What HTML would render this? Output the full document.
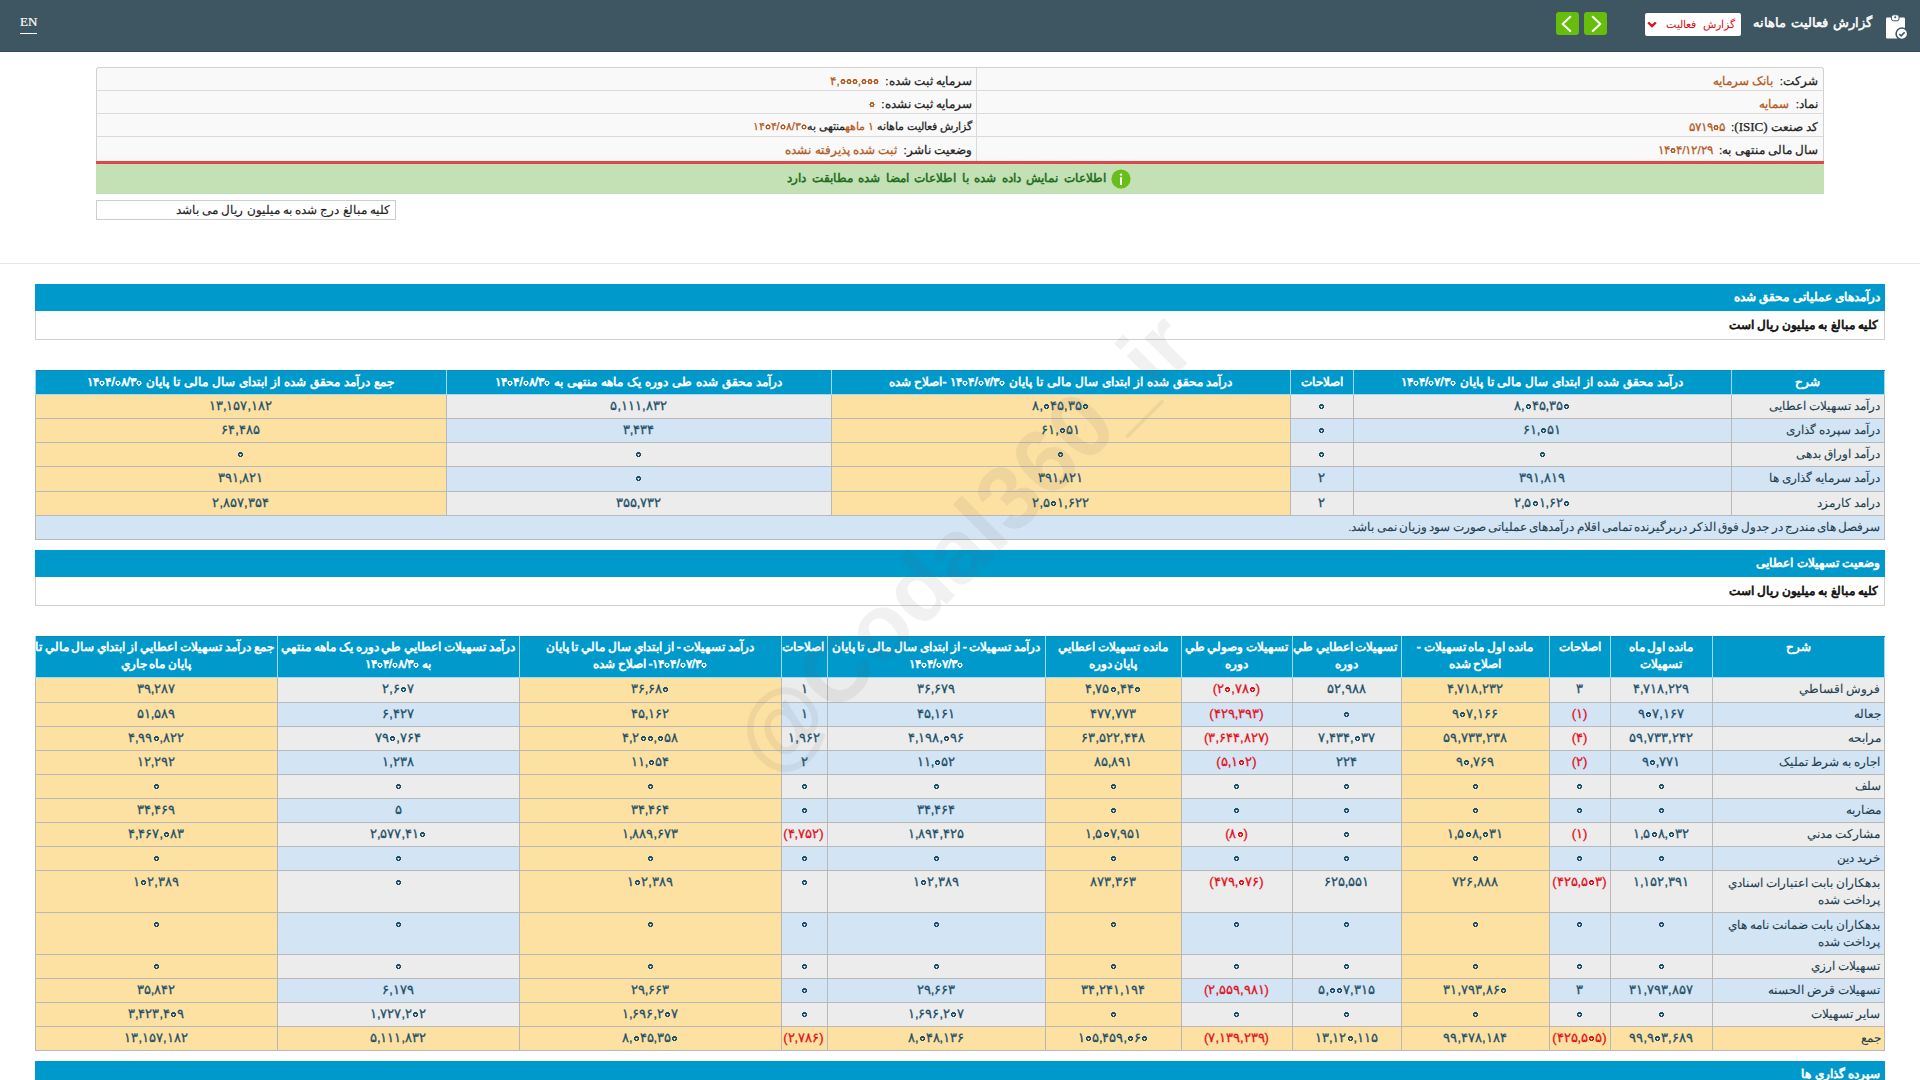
<!DOCTYPE html><html><head><meta charset="utf-8"><style>
*{box-sizing:border-box;margin:0;padding:0}
html,body{width:1920px;height:1080px;overflow:hidden;background:#fff}
body{font-family:"Liberation Sans",sans-serif;font-size:11.6px;color:#222;position:relative}
.abs{position:absolute}
.bd{-webkit-text-stroke:0.35px currentColor}
#top{left:0;top:0;width:1920px;height:52px;background:#3e5562;border-bottom:1px solid #35474f}
#en{left:20px;top:14px;font-family:"Liberation Serif",serif;color:#fff;font-size:13px;line-height:15px;border-bottom:1px solid #fff;padding-bottom:4px;-webkit-text-stroke:0.2px #fff}
#title{right:48px;top:14px;color:#fff;font-size:13px;word-spacing:1.5px;line-height:18px;-webkit-text-stroke:0.5px #fff;direction:rtl;white-space:nowrap}
#dd{left:1645px;top:13px;width:96px;height:23px;background:#fff;border-radius:2px;color:#d81010;font-size:11px;word-spacing:4px;direction:rtl;padding-right:6px;line-height:22px;white-space:nowrap}
.gbtn{top:12px;width:23px;height:23px;background:#67bd0c;border-radius:3px}
.info{left:96px;top:67px;width:1728px;height:94px;border:1px solid #d2d2d2;border-bottom:none;border-radius:3px 3px 0 0;background:#f9f9f9;overflow:hidden}
.info .row{position:absolute;left:0;width:100%;height:23px;border-bottom:1px solid #dadada}
.info .c{position:absolute;height:23px;line-height:23px;direction:rtl;white-space:nowrap;-webkit-text-stroke:0.25px currentColor}
.lab{color:#222}.val{color:#b5581b}
.serif{font-family:"Liberation Serif",serif;font-size:13px}
#redl{left:96px;top:161px;width:1728px;height:3px;background:#e24646}
#green{left:96px;top:164px;width:1728px;height:30px;background:#c3e1b4}
#gtxt{right:814px;top:169px;line-height:18px;color:#1d6b1d;font-size:12px;word-spacing:2.2px;-webkit-text-stroke:0.5px #1d6b1d;direction:rtl;white-space:nowrap}
#note1{left:96px;top:200px;width:300px;height:20px;border:1px solid #cdcdcd;direction:rtl;padding-right:5px;line-height:18px;font-size:11.8px;-webkit-text-stroke:0.15px #222;white-space:nowrap}
#sep{left:0;top:263px;width:1920px;height:1px;background:#e8e8e8}
.sech{left:35px;width:1850px;height:27px;background:#0099cc;color:#fff;direction:rtl;padding-right:5px;line-height:26px;font-size:11.8px;-webkit-text-stroke:0.7px #fff;white-space:nowrap}
.secs{left:35px;width:1850px;height:29px;border:1px solid #cfcfcf;border-top:none;color:#111;direction:rtl;padding-right:6px;line-height:28px;font-size:11.8px;-webkit-text-stroke:0.7px #111;white-space:nowrap}
table{border-collapse:collapse;table-layout:fixed;direction:rtl;position:absolute;width:1850px;left:34.5px}
td,th{border:1px solid #b8b8b8;padding:0 3px;overflow:hidden;white-space:nowrap}
th{background:#0099cc;color:#fff;font-weight:normal;-webkit-text-stroke:0.6px #fff;font-size:12px;word-spacing:0.6px;line-height:22px;text-align:center;vertical-align:top;border-color:#9fdcf3;border-top-color:#1b84ad}
td{text-align:center;color:#1d5068;font-size:13px;vertical-align:top;line-height:22px;-webkit-text-stroke:0.3px currentColor}
td.d{text-align:right;color:#22404e;font-size:11.6px;-webkit-text-stroke:0.1px currentColor}
td.d2{line-height:17px;padding-top:3px}
tr.h2 th{line-height:17px;padding-top:2px;word-spacing:-0.5px}
.nr{word-spacing:-0.9px}
tr.g td{background:#ececec}
tr.b td{background:#d3e4f5}
td.y, tr.y td{background:#fde1a2 !important}
.neg{color:#e3101a}
i.z{font-style:normal;color:transparent;-webkit-text-stroke:0;--zc:#1d5068;background:radial-gradient(circle at 50% 58%, transparent 0.9px, var(--zc) 1.2px, var(--zc) 2.4px, transparent 2.7px)}
.neg i.z{--zc:#e3101a}
th i.z{--zc:#fff}
.val i.z{--zc:#b5581b}
#wm{left:963px;top:543px;transform:translate(-50%,-50%) rotate(-45deg);font-size:91px;font-weight:bold;color:rgba(90,90,90,0.085);white-space:nowrap;pointer-events:none;line-height:1}
</style></head><body>
<div id="top" class="abs"></div>
<div id="en" class="abs">EN</div>
<div id="title" class="abs">گزارش فعالیت ماهانه</div>
<div id="dd" class="abs">گزارش فعالیت</div>
<svg class="abs" style="left:1644px;top:18px" width="16" height="12" viewBox="0 0 16 12"><polyline points="4.2,4.5 8,8.2 11.8,4.5" fill="none" stroke="#e20a0a" stroke-width="2.4"/></svg>
<div class="abs gbtn" style="left:1556px"></div><div class="abs gbtn" style="left:1584px"></div>
<svg class="abs" style="left:1556px;top:12px" width="23" height="23" viewBox="0 0 23 23"><polyline points="14.3,4.7 6.6,11.9 14.3,19.1" fill="none" stroke="#fff" stroke-width="2" stroke-linecap="round" stroke-linejoin="round"/></svg>
<svg class="abs" style="left:1584px;top:12px" width="23" height="23" viewBox="0 0 23 23"><polyline points="8.7,4.7 16.4,11.9 8.7,19.1" fill="none" stroke="#fff" stroke-width="2" stroke-linecap="round" stroke-linejoin="round"/></svg>
<svg class="abs" style="left:1880px;top:10px" width="34" height="34" viewBox="0 0 34 34">
<rect x="6" y="7.5" width="19" height="21" rx="1.2" fill="#fff"/>
<rect x="11.5" y="4.8" width="7.5" height="6" rx="2" fill="#fff" stroke="#3e5562" stroke-width="1"/>
<circle cx="15.2" cy="7.3" r="1" fill="#3e5562"/>
<circle cx="21.9" cy="23.8" r="5.8" fill="#fff" stroke="#3e5562" stroke-width="1.6"/>
<polyline points="19.3,24 21.2,25.8 24.6,22.2" fill="none" stroke="#3e5562" stroke-width="1.6"/>
</svg>
<div class="abs info">
<div class="row" style="top:0px"></div>
<div class="c" style="right:5px;top:1px"><span class="lab">شرکت:</span>&nbsp; <span class="val">بانک سرمایه</span></div>
<div class="c" style="right:851px;top:1px"><span class="lab">سرمایه ثبت شده:</span>&nbsp; <span class="val">۴,<i class="z">۰</i><i class="z">۰</i><i class="z">۰</i>,<i class="z">۰</i><i class="z">۰</i><i class="z">۰</i></span></div>
<div class="row" style="top:23px"></div>
<div class="c" style="right:5px;top:24px"><span class="lab">نماد:</span>&nbsp; <span class="val">سمایه</span></div>
<div class="c" style="right:851px;top:24px"><span class="lab">سرمایه ثبت نشده:</span>&nbsp; <span class="val"><i class="z">۰</i></span></div>
<div class="row" style="top:46px"></div>
<div class="c" style="right:5px;top:47px"><span class="lab">کد صنعت <span class="serif">(ISIC)</span>:</span>&nbsp; <span class="val">۵۷۱۹<i class="z">۰</i>۵</span></div>
<div class="c" style="right:851px;top:47px;font-size:11px"><span class="lab">گزارش فعالیت ماهانه </span><span class="val">۱ ماهه</span><span class="lab">منتهی به</span><span class="val">۱۴<i class="z">۰</i>۴/<i class="z">۰</i>۸/۳<i class="z">۰</i></span></div>
<div class="c" style="right:5px;top:70px"><span class="lab">سال مالی منتهی به:</span>&nbsp; <span class="val">۱۴<i class="z">۰</i>۴/۱۲/۲۹</span></div>
<div class="c" style="right:851px;top:70px"><span class="lab">وضعیت ناشر:</span>&nbsp; <span class="val">ثبت شده پذیرفته نشده</span></div>
<div style="position:absolute;left:879px;top:0;width:1px;height:94px;background:#dadada"></div>
</div>
<div id="redl" class="abs"></div>
<div id="green" class="abs"></div>
<div id="gtxt" class="abs">اطلاعات نمایش داده شده با اطلاعات امضا شده مطابقت دارد</div>
<svg class="abs" style="left:1111px;top:169px" width="20" height="20" viewBox="0 0 20 20"><circle cx="10" cy="10" r="9.6" fill="#69bd1a"/><rect x="9" y="8.2" width="2" height="7.8" fill="#fff"/><circle cx="10" cy="5.6" r="1.2" fill="#fff"/></svg>
<div id="note1" class="abs">کلیه مبالغ درج شده به میلیون ریال می باشد</div>
<div id="sep" class="abs"></div>
<div class="abs sech" style="top:284px">درآمدهای عملیاتی محقق شده</div>
<div class="abs secs" style="top:311px">کلیه مبالغ به میلیون ریال است</div>
<table style="top:369.5px"><colgroup><col style="width:153px"><col style="width:378px"><col style="width:63px"><col style="width:459px"><col style="width:385px"><col style="width:411px"></colgroup>
<tr style="height:24px"><th>شرح</th><th>درآمد محقق شده از ابتدای سال مالی تا پایان ۱۴<i class="z">۰</i>۴/<i class="z">۰</i>۷/۳<i class="z">۰</i></th><th>اصلاحات</th><th>درآمد محقق شده از ابتدای سال مالی تا پایان ۱۴<i class="z">۰</i>۴/<i class="z">۰</i>۷/۳<i class="z">۰</i> -اصلاح شده</th><th>درآمد محقق شده طی دوره یک ماهه منتهی به ۱۴<i class="z">۰</i>۴/<i class="z">۰</i>۸/۳<i class="z">۰</i></th><th>جمع درآمد محقق شده از ابتدای سال مالی تا پایان ۱۴<i class="z">۰</i>۴/<i class="z">۰</i>۸/۳<i class="z">۰</i></th></tr>
<tr class="g" style="height:24px"><td class="d">درآمد تسهیلات اعطایی</td><td><bdo dir="ltr">۸,<i class="z">۰</i>۴۵,۳۵<i class="z">۰</i></bdo></td><td><bdo dir="ltr"><i class="z">۰</i></bdo></td><td class="y"><bdo dir="ltr">۸,<i class="z">۰</i>۴۵,۳۵<i class="z">۰</i></bdo></td><td><bdo dir="ltr">۵,۱۱۱,۸۳۲</bdo></td><td class="y"><bdo dir="ltr">۱۳,۱۵۷,۱۸۲</bdo></td></tr>
<tr class="b" style="height:24px"><td class="d">درآمد سپرده گذاری</td><td><bdo dir="ltr">۶۱,<i class="z">۰</i>۵۱</bdo></td><td><bdo dir="ltr"><i class="z">۰</i></bdo></td><td class="y"><bdo dir="ltr">۶۱,<i class="z">۰</i>۵۱</bdo></td><td><bdo dir="ltr">۳,۴۳۴</bdo></td><td class="y"><bdo dir="ltr">۶۴,۴۸۵</bdo></td></tr>
<tr class="g" style="height:24px"><td class="d">درآمد اوراق بدهی</td><td><bdo dir="ltr"><i class="z">۰</i></bdo></td><td><bdo dir="ltr"><i class="z">۰</i></bdo></td><td class="y"><bdo dir="ltr"><i class="z">۰</i></bdo></td><td><bdo dir="ltr"><i class="z">۰</i></bdo></td><td class="y"><bdo dir="ltr"><i class="z">۰</i></bdo></td></tr>
<tr class="b" style="height:25px"><td class="d">درآمد سرمایه گذاری ها</td><td><bdo dir="ltr">۳۹۱,۸۱۹</bdo></td><td><bdo dir="ltr">۲</bdo></td><td class="y"><bdo dir="ltr">۳۹۱,۸۲۱</bdo></td><td><bdo dir="ltr"><i class="z">۰</i></bdo></td><td class="y"><bdo dir="ltr">۳۹۱,۸۲۱</bdo></td></tr>
<tr class="g" style="height:24px"><td class="d">درامد کارمزد</td><td><bdo dir="ltr">۲,۵<i class="z">۰</i>۱,۶۲<i class="z">۰</i></bdo></td><td><bdo dir="ltr">۲</bdo></td><td class="y"><bdo dir="ltr">۲,۵<i class="z">۰</i>۱,۶۲۲</bdo></td><td><bdo dir="ltr">۳۵۵,۷۳۲</bdo></td><td class="y"><bdo dir="ltr">۲,۸۵۷,۳۵۴</bdo></td></tr>
<tr class="b" style="height:24px"><td class="d nr" colspan="6">سرفصل های مندرج در جدول فوق الذکر دربرگیرنده تمامی اقلام درآمدهای عملیاتی صورت سود وزیان نمی باشد.</td></tr>
</table>
<div class="abs sech" style="top:550px">وضعیت تسهیلات اعطایی</div>
<div class="abs secs" style="top:577px">کلیه مبالغ به میلیون ریال است</div>
<table style="top:635.5px"><colgroup><col style="width:172px"><col style="width:102px"><col style="width:61px"><col style="width:148px"><col style="width:109px"><col style="width:111px"><col style="width:136px"><col style="width:218px"><col style="width:46px"><col style="width:262px"><col style="width:242px"><col style="width:242px"></colgroup>
<tr class="h2" style="height:41px"><th>شرح</th><th>مانده اول ماه<br>تسهیلات</th><th>اصلاحات</th><th>مانده اول ماه تسهیلات -<br>اصلاح شده</th><th>تسهیلات اعطایي طي<br>دوره</th><th>تسهیلات وصولي طي<br>دوره</th><th>مانده تسهیلات اعطایي<br>پایان دوره</th><th>درآمد تسهیلات - از ابتدای سال مالی تا پایان<br>۱۴<i class="z">۰</i>۴/<i class="z">۰</i>۷/۳<i class="z">۰</i></th><th>اصلاحات</th><th>درآمد تسهیلات - از ابتداي سال مالي تا پایان<br>۱۴<i class="z">۰</i>۴/<i class="z">۰</i>۷/۳<i class="z">۰</i>- اصلاح شده</th><th>درآمد تسهیلات اعطایي طي دوره یک ماهه منتهي<br>به ۱۴<i class="z">۰</i>۴/<i class="z">۰</i>۸/۳<i class="z">۰</i></th><th>جمع درآمد تسهیلات اعطایي از ابتداي سال مالي تا<br>پایان ماه جاري</th></tr>
<tr class="g" style="height:25px"><td class="d">فروش اقساطي</td><td><bdo dir="ltr">۴,۷۱۸,۲۲۹</bdo></td><td><bdo dir="ltr">۳</bdo></td><td class="y"><bdo dir="ltr">۴,۷۱۸,۲۳۲</bdo></td><td><bdo dir="ltr">۵۲,۹۸۸</bdo></td><td><span class="neg"><bdo dir="ltr">(۲<i class="z">۰</i>,۷۸<i class="z">۰</i>)</bdo></span></td><td class="y"><bdo dir="ltr">۴,۷۵<i class="z">۰</i>,۴۴<i class="z">۰</i></bdo></td><td><bdo dir="ltr">۳۶,۶۷۹</bdo></td><td><bdo dir="ltr">۱</bdo></td><td class="y"><bdo dir="ltr">۳۶,۶۸<i class="z">۰</i></bdo></td><td><bdo dir="ltr">۲,۶<i class="z">۰</i>۷</bdo></td><td class="y"><bdo dir="ltr">۳۹,۲۸۷</bdo></td></tr>
<tr class="b" style="height:24px"><td class="d">جعاله</td><td><bdo dir="ltr">۹<i class="z">۰</i>۷,۱۶۷</bdo></td><td><span class="neg"><bdo dir="ltr">(۱)</bdo></span></td><td class="y"><bdo dir="ltr">۹<i class="z">۰</i>۷,۱۶۶</bdo></td><td><bdo dir="ltr"><i class="z">۰</i></bdo></td><td><span class="neg"><bdo dir="ltr">(۴۲۹,۳۹۳)</bdo></span></td><td class="y"><bdo dir="ltr">۴۷۷,۷۷۳</bdo></td><td><bdo dir="ltr">۴۵,۱۶۱</bdo></td><td><bdo dir="ltr">۱</bdo></td><td class="y"><bdo dir="ltr">۴۵,۱۶۲</bdo></td><td><bdo dir="ltr">۶,۴۲۷</bdo></td><td class="y"><bdo dir="ltr">۵۱,۵۸۹</bdo></td></tr>
<tr class="g" style="height:24px"><td class="d">مرابحه</td><td><bdo dir="ltr">۵۹,۷۳۳,۲۴۲</bdo></td><td><span class="neg"><bdo dir="ltr">(۴)</bdo></span></td><td class="y"><bdo dir="ltr">۵۹,۷۳۳,۲۳۸</bdo></td><td><bdo dir="ltr">۷,۴۳۴,<i class="z">۰</i>۳۷</bdo></td><td><span class="neg"><bdo dir="ltr">(۳,۶۴۴,۸۲۷)</bdo></span></td><td class="y"><bdo dir="ltr">۶۳,۵۲۲,۴۴۸</bdo></td><td><bdo dir="ltr">۴,۱۹۸,<i class="z">۰</i>۹۶</bdo></td><td><bdo dir="ltr">۱,۹۶۲</bdo></td><td class="y"><bdo dir="ltr">۴,۲<i class="z">۰</i><i class="z">۰</i>,<i class="z">۰</i>۵۸</bdo></td><td><bdo dir="ltr">۷۹<i class="z">۰</i>,۷۶۴</bdo></td><td class="y"><bdo dir="ltr">۴,۹۹<i class="z">۰</i>,۸۲۲</bdo></td></tr>
<tr class="b" style="height:24px"><td class="d">اجاره به شرط تملیک</td><td><bdo dir="ltr">۹<i class="z">۰</i>,۷۷۱</bdo></td><td><span class="neg"><bdo dir="ltr">(۲)</bdo></span></td><td class="y"><bdo dir="ltr">۹<i class="z">۰</i>,۷۶۹</bdo></td><td><bdo dir="ltr">۲۲۴</bdo></td><td><span class="neg"><bdo dir="ltr">(۵,۱<i class="z">۰</i>۲)</bdo></span></td><td class="y"><bdo dir="ltr">۸۵,۸۹۱</bdo></td><td><bdo dir="ltr">۱۱,<i class="z">۰</i>۵۲</bdo></td><td><bdo dir="ltr">۲</bdo></td><td class="y"><bdo dir="ltr">۱۱,<i class="z">۰</i>۵۴</bdo></td><td><bdo dir="ltr">۱,۲۳۸</bdo></td><td class="y"><bdo dir="ltr">۱۲,۲۹۲</bdo></td></tr>
<tr class="g" style="height:24px"><td class="d">سلف</td><td><bdo dir="ltr"><i class="z">۰</i></bdo></td><td><bdo dir="ltr"><i class="z">۰</i></bdo></td><td class="y"><bdo dir="ltr"><i class="z">۰</i></bdo></td><td><bdo dir="ltr"><i class="z">۰</i></bdo></td><td><bdo dir="ltr"><i class="z">۰</i></bdo></td><td class="y"><bdo dir="ltr"><i class="z">۰</i></bdo></td><td><bdo dir="ltr"><i class="z">۰</i></bdo></td><td><bdo dir="ltr"><i class="z">۰</i></bdo></td><td class="y"><bdo dir="ltr"><i class="z">۰</i></bdo></td><td><bdo dir="ltr"><i class="z">۰</i></bdo></td><td class="y"><bdo dir="ltr"><i class="z">۰</i></bdo></td></tr>
<tr class="b" style="height:24px"><td class="d">مضاربه</td><td><bdo dir="ltr"><i class="z">۰</i></bdo></td><td><bdo dir="ltr"><i class="z">۰</i></bdo></td><td class="y"><bdo dir="ltr"><i class="z">۰</i></bdo></td><td><bdo dir="ltr"><i class="z">۰</i></bdo></td><td><bdo dir="ltr"><i class="z">۰</i></bdo></td><td class="y"><bdo dir="ltr"><i class="z">۰</i></bdo></td><td><bdo dir="ltr">۳۴,۴۶۴</bdo></td><td><bdo dir="ltr"><i class="z">۰</i></bdo></td><td class="y"><bdo dir="ltr">۳۴,۴۶۴</bdo></td><td><bdo dir="ltr">۵</bdo></td><td class="y"><bdo dir="ltr">۳۴,۴۶۹</bdo></td></tr>
<tr class="g" style="height:24px"><td class="d">مشارکت مدني</td><td><bdo dir="ltr">۱,۵<i class="z">۰</i>۸,<i class="z">۰</i>۳۲</bdo></td><td><span class="neg"><bdo dir="ltr">(۱)</bdo></span></td><td class="y"><bdo dir="ltr">۱,۵<i class="z">۰</i>۸,<i class="z">۰</i>۳۱</bdo></td><td><bdo dir="ltr"><i class="z">۰</i></bdo></td><td><span class="neg"><bdo dir="ltr">(۸<i class="z">۰</i>)</bdo></span></td><td class="y"><bdo dir="ltr">۱,۵<i class="z">۰</i>۷,۹۵۱</bdo></td><td><bdo dir="ltr">۱,۸۹۴,۴۲۵</bdo></td><td><span class="neg"><bdo dir="ltr">(۴,۷۵۲)</bdo></span></td><td class="y"><bdo dir="ltr">۱,۸۸۹,۶۷۳</bdo></td><td><bdo dir="ltr">۲,۵۷۷,۴۱<i class="z">۰</i></bdo></td><td class="y"><bdo dir="ltr">۴,۴۶۷,<i class="z">۰</i>۸۳</bdo></td></tr>
<tr class="b" style="height:24px"><td class="d">خرید دین</td><td><bdo dir="ltr"><i class="z">۰</i></bdo></td><td><bdo dir="ltr"><i class="z">۰</i></bdo></td><td class="y"><bdo dir="ltr"><i class="z">۰</i></bdo></td><td><bdo dir="ltr"><i class="z">۰</i></bdo></td><td><bdo dir="ltr"><i class="z">۰</i></bdo></td><td class="y"><bdo dir="ltr"><i class="z">۰</i></bdo></td><td><bdo dir="ltr"><i class="z">۰</i></bdo></td><td><bdo dir="ltr"><i class="z">۰</i></bdo></td><td class="y"><bdo dir="ltr"><i class="z">۰</i></bdo></td><td><bdo dir="ltr"><i class="z">۰</i></bdo></td><td class="y"><bdo dir="ltr"><i class="z">۰</i></bdo></td></tr>
<tr class="g" style="height:42px"><td class="d d2">بدهکاران بابت اعتبارات اسنادي<br>پرداخت شده</td><td><bdo dir="ltr">۱,۱۵۲,۳۹۱</bdo></td><td><span class="neg"><bdo dir="ltr">(۴۲۵,۵<i class="z">۰</i>۳)</bdo></span></td><td class="y"><bdo dir="ltr">۷۲۶,۸۸۸</bdo></td><td><bdo dir="ltr">۶۲۵,۵۵۱</bdo></td><td><span class="neg"><bdo dir="ltr">(۴۷۹,<i class="z">۰</i>۷۶)</bdo></span></td><td class="y"><bdo dir="ltr">۸۷۳,۳۶۳</bdo></td><td><bdo dir="ltr">۱<i class="z">۰</i>۲,۳۸۹</bdo></td><td><bdo dir="ltr"><i class="z">۰</i></bdo></td><td class="y"><bdo dir="ltr">۱<i class="z">۰</i>۲,۳۸۹</bdo></td><td><bdo dir="ltr"><i class="z">۰</i></bdo></td><td class="y"><bdo dir="ltr">۱<i class="z">۰</i>۲,۳۸۹</bdo></td></tr>
<tr class="b" style="height:42px"><td class="d d2">بدهکاران بابت ضمانت نامه هاي<br>پرداخت شده</td><td><bdo dir="ltr"><i class="z">۰</i></bdo></td><td><bdo dir="ltr"><i class="z">۰</i></bdo></td><td class="y"><bdo dir="ltr"><i class="z">۰</i></bdo></td><td><bdo dir="ltr"><i class="z">۰</i></bdo></td><td><bdo dir="ltr"><i class="z">۰</i></bdo></td><td class="y"><bdo dir="ltr"><i class="z">۰</i></bdo></td><td><bdo dir="ltr"><i class="z">۰</i></bdo></td><td><bdo dir="ltr"><i class="z">۰</i></bdo></td><td class="y"><bdo dir="ltr"><i class="z">۰</i></bdo></td><td><bdo dir="ltr"><i class="z">۰</i></bdo></td><td class="y"><bdo dir="ltr"><i class="z">۰</i></bdo></td></tr>
<tr class="g" style="height:24px"><td class="d">تسهیلات ارزي</td><td><bdo dir="ltr"><i class="z">۰</i></bdo></td><td><bdo dir="ltr"><i class="z">۰</i></bdo></td><td class="y"><bdo dir="ltr"><i class="z">۰</i></bdo></td><td><bdo dir="ltr"><i class="z">۰</i></bdo></td><td><bdo dir="ltr"><i class="z">۰</i></bdo></td><td class="y"><bdo dir="ltr"><i class="z">۰</i></bdo></td><td><bdo dir="ltr"><i class="z">۰</i></bdo></td><td><bdo dir="ltr"><i class="z">۰</i></bdo></td><td class="y"><bdo dir="ltr"><i class="z">۰</i></bdo></td><td><bdo dir="ltr"><i class="z">۰</i></bdo></td><td class="y"><bdo dir="ltr"><i class="z">۰</i></bdo></td></tr>
<tr class="b" style="height:24px"><td class="d">تسهیلات قرض الحسنه</td><td><bdo dir="ltr">۳۱,۷۹۳,۸۵۷</bdo></td><td><bdo dir="ltr">۳</bdo></td><td class="y"><bdo dir="ltr">۳۱,۷۹۳,۸۶<i class="z">۰</i></bdo></td><td><bdo dir="ltr">۵,<i class="z">۰</i><i class="z">۰</i>۷,۳۱۵</bdo></td><td><span class="neg"><bdo dir="ltr">(۲,۵۵۹,۹۸۱)</bdo></span></td><td class="y"><bdo dir="ltr">۳۴,۲۴۱,۱۹۴</bdo></td><td><bdo dir="ltr">۲۹,۶۶۳</bdo></td><td><bdo dir="ltr"><i class="z">۰</i></bdo></td><td class="y"><bdo dir="ltr">۲۹,۶۶۳</bdo></td><td><bdo dir="ltr">۶,۱۷۹</bdo></td><td class="y"><bdo dir="ltr">۳۵,۸۴۲</bdo></td></tr>
<tr class="g" style="height:24px"><td class="d">سایر تسهیلات</td><td><bdo dir="ltr"><i class="z">۰</i></bdo></td><td><bdo dir="ltr"><i class="z">۰</i></bdo></td><td class="y"><bdo dir="ltr"><i class="z">۰</i></bdo></td><td><bdo dir="ltr"><i class="z">۰</i></bdo></td><td><bdo dir="ltr"><i class="z">۰</i></bdo></td><td class="y"><bdo dir="ltr"><i class="z">۰</i></bdo></td><td><bdo dir="ltr">۱,۶۹۶,۲<i class="z">۰</i>۷</bdo></td><td><bdo dir="ltr"><i class="z">۰</i></bdo></td><td class="y"><bdo dir="ltr">۱,۶۹۶,۲<i class="z">۰</i>۷</bdo></td><td><bdo dir="ltr">۱,۷۲۷,۲<i class="z">۰</i>۲</bdo></td><td class="y"><bdo dir="ltr">۳,۴۲۳,۴<i class="z">۰</i>۹</bdo></td></tr>
<tr class="y" style="height:24px"><td class="d">جمع</td><td><bdo dir="ltr">۹۹,۹<i class="z">۰</i>۳,۶۸۹</bdo></td><td><span class="neg"><bdo dir="ltr">(۴۲۵,۵<i class="z">۰</i>۵)</bdo></span></td><td class="y"><bdo dir="ltr">۹۹,۴۷۸,۱۸۴</bdo></td><td><bdo dir="ltr">۱۳,۱۲<i class="z">۰</i>,۱۱۵</bdo></td><td><span class="neg"><bdo dir="ltr">(۷,۱۳۹,۲۳۹)</bdo></span></td><td class="y"><bdo dir="ltr">۱<i class="z">۰</i>۵,۴۵۹,<i class="z">۰</i>۶<i class="z">۰</i></bdo></td><td><bdo dir="ltr">۸,<i class="z">۰</i>۴۸,۱۳۶</bdo></td><td><span class="neg"><bdo dir="ltr">(۲,۷۸۶)</bdo></span></td><td class="y"><bdo dir="ltr">۸,<i class="z">۰</i>۴۵,۳۵<i class="z">۰</i></bdo></td><td><bdo dir="ltr">۵,۱۱۱,۸۳۲</bdo></td><td class="y"><bdo dir="ltr">۱۳,۱۵۷,۱۸۲</bdo></td></tr>
</table>
<div class="abs sech" style="top:1061px">سپرده گذاری ها</div>
<div id="wm" class="abs">@Codal360_ir</div>
</body></html>
